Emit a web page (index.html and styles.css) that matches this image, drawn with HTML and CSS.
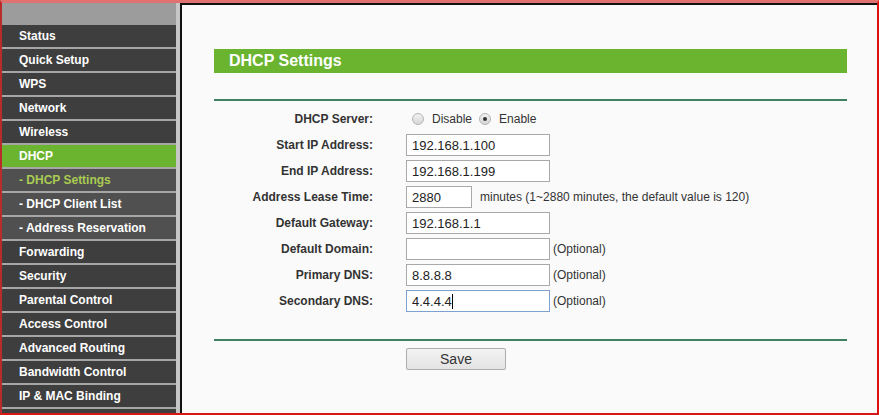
FILE: index.html
```html
<!DOCTYPE html>
<html lang="en">
<head>
  <meta charset="UTF-8">
  <title>DHCP Settings</title>
  <link rel="stylesheet" href="styles.css">
</head>
<body>

  <div class="frame">
    <div class="menu">
      <div class="menu-head"></div>
      <a class="item">Status</a>
      <a class="item">Quick Setup</a>
      <a class="item">WPS</a>
      <a class="item">Network</a>
      <a class="item">Wireless</a>
      <a class="item active">DHCP</a>
      <a class="item sub current">- DHCP Settings</a>
      <a class="item sub">- DHCP Client List</a>
      <a class="item sub">- Address Reservation</a>
      <a class="item">Forwarding</a>
      <a class="item">Security</a>
      <a class="item">Parental Control</a>
      <a class="item">Access Control</a>
      <a class="item">Advanced Routing</a>
      <a class="item">Bandwidth Control</a>
      <a class="item">IP &amp; MAC Binding</a>
      <a class="item"></a>
    </div>
    <div class="gutter"></div>

    <div class="main">
      <div class="title">DHCP Settings</div>
      <div class="rule"></div>

      <div class="form">
        <div class="row">
          <label>DHCP Server:</label>
          <div class="field">
            <span class="radio"></span><span class="opt">Disable</span>
            <span class="radio checked"></span><span class="opt">Enable</span>
          </div>
        </div>
        <div class="row">
          <label>Start IP Address:</label>
          <div class="field"><input class="text" value="192.168.1.100"></div>
        </div>
        <div class="row">
          <label>End IP Address:</label>
          <div class="field"><input class="text" value="192.168.1.199"></div>
        </div>
        <div class="row">
          <label>Address Lease Time:</label>
          <div class="field">
            <input class="text short" value="2880">
            <span class="hint">minutes (1~2880 minutes, the default value is 120)</span>
          </div>
        </div>
        <div class="row">
          <label>Default Gateway:</label>
          <div class="field"><input class="text" value="192.168.1.1"></div>
        </div>
        <div class="row">
          <label>Default Domain:</label>
          <div class="field"><input class="text" value=""><span class="note">(Optional)</span></div>
        </div>
        <div class="row">
          <label>Primary DNS:</label>
          <div class="field"><input class="text" value="8.8.8.8"><span class="note">(Optional)</span></div>
        </div>
        <div class="row">
          <label>Secondary DNS:</label>
          <div class="field">
            <span class="caret-wrap"><input class="text focus" value="4.4.4.4"><span class="caret"></span></span><span class="note">(Optional)</span>
          </div>
        </div>
      </div>

      <div class="rule bottom"></div>
      <div class="actions">
        <button class="btn">Save</button>
      </div>
    </div>
  </div>

</body>
</html>
```

FILE: styles.css
```css
body {
  margin: 0;
  background: #fff;
  font-family: "Liberation Sans", Arial, sans-serif;
}
.frame {
  width: 879px;
  height: 415px;
  box-sizing: border-box;
  border-top: 3px solid #e07272;
  border-left: 2px solid #b92c2c;
  border-right: 2px solid #e01010;
  border-bottom: 2px solid #d81818;
  display: flex;
  overflow: hidden;
}
.menu {
  width: 174px;
  flex-shrink: 0;
  background: #a3a3a3;
}
.menu-head {
  height: 22px;
  background: #9c9c9c;
}
.item {
  display: block;
  height: 22px;
  line-height: 22px;
  padding-left: 17px;
  background: #3e3e3e;
  border-bottom: 2px solid #a6a6a6;
  color: #fff;
  font-size: 12px;
  font-weight: bold;
  white-space: nowrap;
}
.item.active {
  background: #6ab42f;
}
.item.sub {
  background: #505050;
}
.item.current {
  color: #aacb52;
}
.gutter {
  width: 4px;
  flex-shrink: 0;
  background: #c6c6c6;
}
.main {
  flex: 1;
  background: #fafafa;
  border-top: 2px solid #111;
  border-left: 2px solid #111;
  padding: 44px 30px 0 32px;
}
.title {
  height: 24px;
  line-height: 24px;
  background: #6ab42f;
  color: #fff;
  font-size: 16px;
  font-weight: bold;
  padding-left: 15px;
}
.rule {
  margin-top: 26px;
  border-top: 2px solid #3f8060;
}
.rule.bottom {
  margin-top: 25px;
}
.form {
  margin-top: 5px;
}
.row {
  display: flex;
  align-items: center;
  height: 26px;
}
.row label {
  width: 159px;
  flex-shrink: 0;
  text-align: right;
  font-size: 12px;
  font-weight: bold;
  color: #333;
}
.field {
  display: flex;
  align-items: center;
  margin-left: 33px;
  font-size: 12px;
  color: #333;
}
.radio {
  width: 10px;
  height: 10px;
  border: 1px solid #b4b4b4;
  border-radius: 50%;
  background: linear-gradient(#f2f2f2, #d6d6d6);
  margin-left: 6px;
  margin-right: 8px;
  display: flex;
  align-items: center;
  justify-content: center;
}
.radio.checked::after {
  content: "";
  width: 4px;
  height: 4px;
  border-radius: 50%;
  background: #333;
}
.opt {
  margin-right: 1px;
}
.text {
  width: 144px;
  height: 22px;
  box-sizing: border-box;
  border: 1px solid #a9a9a9;
  background: #fff;
  padding: 0 5px;
  font-family: "Liberation Sans", Arial, sans-serif;
  font-size: 13px;
  color: #222;
  margin: 0;
  outline: none;
}
.text.short {
  width: 66px;
}
.text.focus {
  border-color: #7da2ce;
}
.hint {
  margin-left: 8px;
}
.note {
  margin-left: 3px;
}
.caret-wrap {
  position: relative;
  display: flex;
}
.caret {
  position: absolute;
  left: 46px;
  top: 4px;
  width: 1px;
  height: 15px;
  background: #000;
}
.actions {
  margin-top: 7px;
  padding-left: 192px;
}
.btn {
  width: 100px;
  height: 22px;
  border: 1px solid #adadad;
  border-radius: 2px;
  background: linear-gradient(#f3f3f3, #e3e3e3);
  font-family: "Liberation Sans", Arial, sans-serif;
  font-size: 14px;
  color: #333;
  padding: 0;
}
```
